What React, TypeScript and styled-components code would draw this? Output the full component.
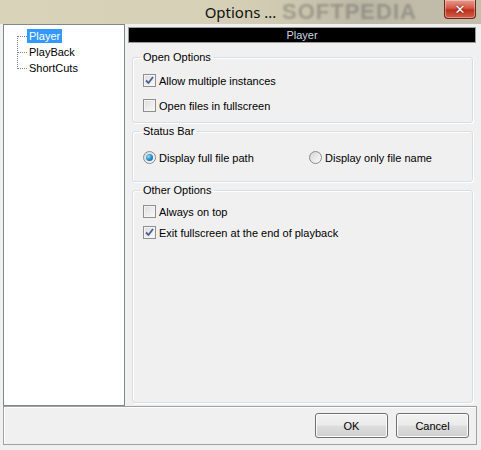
import React from "react";
import styled, { createGlobalStyle } from "styled-components";

const GlobalStyle = createGlobalStyle`
  html, body {
    margin: 0;
    padding: 0;
    background: #f0f0f0;
  }
  * { box-sizing: border-box; }
`;

const Window = styled.div`
  width: 481px;
  height: 450px;
  background: #f0f0f0;
  display: flex;
  flex-direction: column;
  font-family: "Liberation Sans", Arial, sans-serif;
  font-size: 11px;
  color: #000;
  overflow: hidden;
`;

const TitleBar = styled.div`
  position: relative;
  height: 24px;
  flex: none;
  display: flex;
  align-items: center;
  justify-content: center;
  background: linear-gradient(90deg, #d8d3b9 0%, #d6d1b6 45%, #cdc8af 60%, #bcb8a6 75%, #c3bfab 100%);
  overflow: hidden;
`;

const Title = styled.span`
  position: relative;
  z-index: 1;
  font-family: "Noto Sans", "Open Sans", sans-serif;
  font-size: 15px;
  line-height: 20px;
  color: #111;
  margin-top: -1px;
`;

const Watermark = styled.span`
  position: absolute;
  left: 282px;
  top: 0;
  font-family: "Liberation Sans", Arial, sans-serif;
  font-weight: bold;
  font-size: 22px;
  line-height: 24px;
  letter-spacing: 1px;
  color: rgba(90, 90, 90, 0.4);
  filter: blur(1.2px);
`;

const CloseButton = styled.div`
  position: absolute;
  right: 5px;
  top: 0;
  width: 32px;
  height: 19px;
  border: 1px solid #6e231b;
  border-top: none;
  border-radius: 0 0 4px 4px;
  background: linear-gradient(#e79a8c 0%, #d45a47 45%, #bf2f1c 55%, #d0604b 100%);
  box-shadow: inset 0 0 0 1px rgba(255, 255, 255, 0.35);
  display: flex;
  align-items: center;
  justify-content: center;
  color: #fff;
  font-family: "DejaVu Sans", sans-serif;
  font-weight: bold;
  font-size: 13px;
  text-shadow: 0 0 2px #3a1010;
`;

const Body = styled.div`
  flex: none;
  height: 382px;
  display: flex;
  padding: 0 4px 0 3px;
  gap: 3px;
`;

const Tree = styled.div`
  width: 122px;
  height: 382px;
  background: #fff;
  border: 1px solid #828790;
  padding: 3px 0 0 13px;
`;

const TreeLines = styled.div`
  position: relative;

  &::before {
    content: "";
    position: absolute;
    left: 0;
    top: 8px;
    height: 33px;
    border-left: 1px dotted #808080;
  }
`;

const TreeItem = styled.div`
  position: relative;
  height: 16px;
  display: flex;
  align-items: center;
  padding-left: 10px;

  &::before {
    content: "";
    position: absolute;
    left: 1px;
    top: 8px;
    width: 9px;
    border-top: 1px dotted #808080;
  }
`;

const TreeLabel = styled.span<{ $selected?: boolean }>`
  padding: 1px 2px;
  background: ${(p) => (p.$selected ? "#3399ff" : "transparent")};
  color: ${(p) => (p.$selected ? "#fff" : "#000")};
`;

const Content = styled.div`
  flex: 1;
  display: flex;
  flex-direction: column;
  padding-top: 3px;
`;

const Header = styled.div`
  height: 16px;
  background: #000;
  border: 1px solid #9a9a9a;
  color: #c9d6e3;
  display: flex;
  align-items: center;
  justify-content: center;
  margin-right: 1px;
`;

const Groups = styled.div`
  display: flex;
  flex-direction: column;
  gap: 2px;
  padding: 8px 4px 0 4px;
`;

const Group = styled.fieldset<{ $height: number }>`
  margin: 0;
  padding: 0 10px;
  height: ${(p) => p.$height}px;
  border: 1px solid #d5dfe5;
  border-radius: 3px;
  box-shadow: inset 1px 1px 0 #fff, 1px 1px 0 #fff;
  display: flex;
  flex-direction: column;
`;

const Legend = styled.legend`
  padding: 0 3px;
  margin-left: -3px;
  line-height: 13px;
`;

const Rows = styled.div<{ $row?: boolean; $gap?: number; $top: number }>`
  display: flex;
  flex-direction: ${(p) => (p.$row ? "row" : "column")};
  gap: ${(p) => p.$gap ?? 0}px;
  padding-top: ${(p) => p.$top}px;
`;

const Option = styled.label<{ $width?: number }>`
  display: flex;
  align-items: center;
  gap: 3px;
  height: 13px;
  width: ${(p) => (p.$width ? `${p.$width}px` : "auto")};
`;

const Box = styled.span`
  width: 13px;
  height: 13px;
  flex: none;
  border: 1px solid #8f8f8f;
  background: linear-gradient(135deg, #dcdcdc, #fafafa);
  box-shadow: inset 0 0 0 1px #f4f4f4;
  display: flex;
  align-items: center;
  justify-content: center;
`;

const RadioDot = styled.span<{ $checked?: boolean }>`
  width: 13px;
  height: 13px;
  flex: none;
  border-radius: 50%;
  border: 1px solid #8a8a8a;
  background: linear-gradient(135deg, #d6d6d6, #fbfbfb);
  display: flex;
  align-items: center;
  justify-content: center;

  &::after {
    content: "";
    display: ${(p) => (p.$checked ? "block" : "none")};
    width: 7px;
    height: 7px;
    border-radius: 50%;
    background: radial-gradient(circle at 35% 35%, #8fe0ff 0%, #1b86c9 55%, #0b4f86 100%);
  }
`;

const Footer = styled.div`
  margin: 0 4px 0 3px;
  height: 39px;
  border: 1px solid #a0a0a0;
  box-shadow: inset 1px 1px 0 #fff;
  display: flex;
  align-items: center;
  justify-content: flex-end;
  gap: 8px;
  padding-right: 7px;
`;

const Button = styled.button`
  width: 73px;
  height: 25px;
  border: 1px solid #707070;
  border-radius: 3px;
  background: linear-gradient(#f2f2f2 0%, #ebebeb 48%, #dddddd 52%, #cfcfcf 100%);
  box-shadow: inset 0 0 0 1px #fcfcfc;
  font-family: "Liberation Sans", Arial, sans-serif;
  font-size: 11px;
  color: #000;
  padding: 0;
`;

const Check = () => (
  <svg width="9" height="9" viewBox="0 0 9 9">
    <path d="M1 4.5 L3.5 7 L8 1" fill="none" stroke="#4a5f9a" strokeWidth="1.8" />
  </svg>
);

const CheckOption = ({ checked, label }: { checked?: boolean; label: string }) => (
  <Option>
    <Box>{checked && <Check />}</Box>
    <span>{label}</span>
  </Option>
);

export default function App() {
  return (
    <>
      <GlobalStyle />
      <Window>
        <TitleBar>
          <Watermark>SOFTPEDIA</Watermark>
          <Title>Options ...</Title>
          <CloseButton>✕</CloseButton>
        </TitleBar>
        <Body>
          <Tree>
            <TreeLines>
              <TreeItem>
                <TreeLabel $selected>Player</TreeLabel>
              </TreeItem>
              <TreeItem>
                <TreeLabel>PlayBack</TreeLabel>
              </TreeItem>
              <TreeItem>
                <TreeLabel>ShortCuts</TreeLabel>
              </TreeItem>
            </TreeLines>
          </Tree>
          <Content>
            <Header>Player</Header>
            <Groups>
              <Group $height={72}>
                <Legend>Open Options</Legend>
                <Rows $top={10} $gap={12}>
                  <CheckOption checked label="Allow multiple instances" />
                  <CheckOption label="Open files in fullscreen" />
                </Rows>
              </Group>
              <Group $height={57}>
                <Legend>Status Bar</Legend>
                <Rows $row $top={13}>
                  <Option $width={166}>
                    <RadioDot $checked />
                    <span>Display full file path</span>
                  </Option>
                  <Option>
                    <RadioDot />
                    <span>Display only file name</span>
                  </Option>
                </Rows>
              </Group>
              <Group $height={219}>
                <Legend>Other Options</Legend>
                <Rows $top={8} $gap={8}>
                  <CheckOption label="Always on top" />
                  <CheckOption checked label="Exit fullscreen at the end of playback" />
                </Rows>
              </Group>
            </Groups>
          </Content>
        </Body>
        <Footer>
          <Button>OK</Button>
          <Button>Cancel</Button>
        </Footer>
      </Window>
    </>
  );
}
